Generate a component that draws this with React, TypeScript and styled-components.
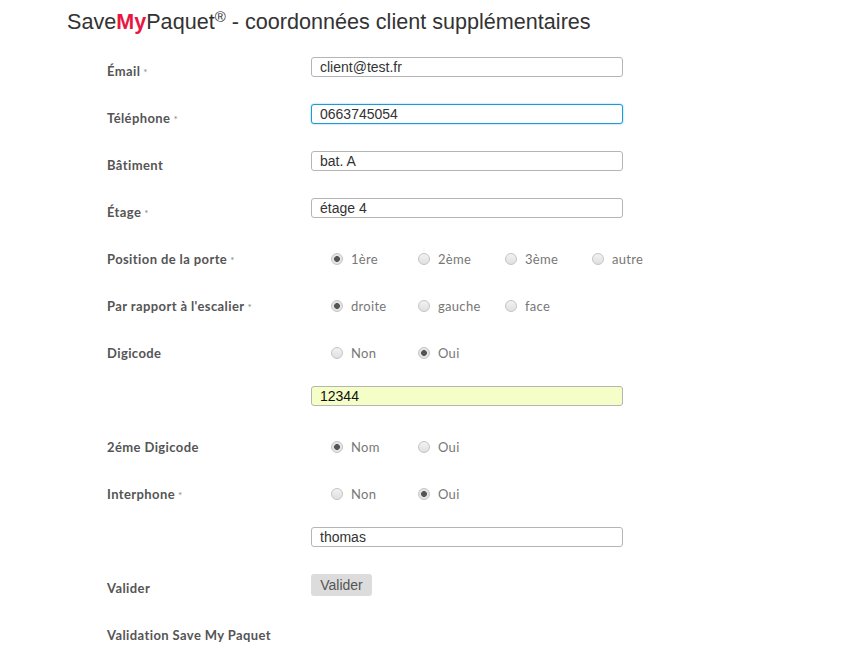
import React from "react";
import styled, { createGlobalStyle } from "styled-components";

const GlobalStyle = createGlobalStyle`
  html, body { margin: 0; padding: 0; background: #fff; }
  body { font-family: "Liberation Sans", Arial, sans-serif; }
`;

const Page = styled.div`
  padding: 9px 0 0 67px;
`;

const Title = styled.h1`
  margin: 0 0 12px 0;
  font-family: "Liberation Sans", Arial, sans-serif;
  font-weight: 400;
  font-size: 21.6px;
  line-height: 26px;
  color: #333;
`;

const Brand = styled.span`
  color: #e8173f;
  font-weight: 700;
`;

const Reg = styled.sup`
  font-size: 15px;
  line-height: 0;
  vertical-align: 7px;
`;

const Form = styled.form`
  margin-left: 40px;
  display: flex;
  flex-direction: column;
`;

const Row = styled.div`
  display: grid;
  grid-template-columns: 204px 312px;
  align-items: center;
  height: 47px;
`;

const Label = styled.label`
  font-family: Lato, "Open Sans", sans-serif;
  font-weight: 700;
  font-size: 13px;
  letter-spacing: 0.4px;
  color: #555;
  white-space: nowrap;
`;

const Star = styled.span`
  font-size: 10px;
  color: #888;
  font-weight: 400;
  margin-left: 3px;
`;

const Input = styled.input<{ $focused?: boolean; $filled?: boolean }>`
  box-sizing: border-box;
  width: 312px;
  height: 20px;
  margin: 0 0 8px 0;
  padding: 0 8px;
  border: 1px solid ${(p) => (p.$focused ? "#1a9ad6" : "#b5b5b5")};
  box-shadow: ${(p) => (p.$focused ? "0 0 2px rgba(26,154,214,0.6)" : "none")};
  border-radius: 3px;
  background: ${(p) => (p.$filled ? "#f5fec7" : "#fff")};
  font-family: "Liberation Sans", Arial, sans-serif;
  font-size: 14px;
  color: ${(p) => (p.$filled ? "#111" : "#333")};
  outline: none;
`;

const RadioGroup = styled.div`
  display: flex;
  padding-left: 20px;
`;

const Option = styled.label`
  flex: none;
  width: 87px;
  display: flex;
  align-items: center;
  gap: 8px;
  font-family: Lato, "Open Sans", sans-serif;
  font-size: 13px;
  letter-spacing: 0.3px;
  color: #777;
`;

const Radio = styled.span<{ $checked?: boolean }>`
  box-sizing: border-box;
  width: 12px;
  height: 12px;
  border-radius: 50%;
  border: 1px solid #c4c4c4;
  background: ${(p) =>
    p.$checked
      ? "radial-gradient(circle, #555 0 2.6px, #e4e4e4 3.2px)"
      : "linear-gradient(#f2f2f2, #e0e0e0)"};
  flex: none;
`;

const Button = styled.button`
  justify-self: start;
  width: 61px;
  height: 22px;
  margin-bottom: 6px;
  padding: 0;
  border: none;
  border-radius: 3px;
  background: #dcdcdc;
  font-family: "Liberation Sans", Arial, sans-serif;
  font-size: 14px;
  color: #555;
`;

type Opt = { label: string; checked?: boolean };

const Radios = ({ options }: { options: Opt[] }) => (
  <RadioGroup>
    {options.map((o) => (
      <Option key={o.label}>
        <Radio $checked={o.checked} />
        {o.label}
      </Option>
    ))}
  </RadioGroup>
);

const Req = () => <Star>*</Star>;

export default function App() {
  return (
    <>
      <GlobalStyle />
      <Page>
        <Title>
          Save<Brand>My</Brand>Paquet<Reg>®</Reg> - coordonnées client supplémentaires
        </Title>
        <Form>
          <Row>
            <Label>Émail<Req /></Label>
            <Input defaultValue="client@test.fr" />
          </Row>
          <Row>
            <Label>Téléphone<Req /></Label>
            <Input $focused defaultValue="0663745054" />
          </Row>
          <Row>
            <Label>Bâtiment</Label>
            <Input defaultValue="bat. A" />
          </Row>
          <Row>
            <Label>Étage<Req /></Label>
            <Input defaultValue="étage 4" />
          </Row>
          <Row>
            <Label>Position de la porte<Req /></Label>
            <Radios
              options={[
                { label: "1ère", checked: true },
                { label: "2ème" },
                { label: "3ème" },
                { label: "autre" },
              ]}
            />
          </Row>
          <Row>
            <Label>Par rapport à l'escalier<Req /></Label>
            <Radios
              options={[{ label: "droite", checked: true }, { label: "gauche" }, { label: "face" }]}
            />
          </Row>
          <Row>
            <Label>Digicode</Label>
            <Radios options={[{ label: "Non" }, { label: "Oui", checked: true }]} />
          </Row>
          <Row>
            <span />
            <Input $filled defaultValue="12344" />
          </Row>
          <Row>
            <Label>2éme Digicode</Label>
            <Radios options={[{ label: "Nom", checked: true }, { label: "Oui" }]} />
          </Row>
          <Row>
            <Label>Interphone<Req /></Label>
            <Radios options={[{ label: "Non" }, { label: "Oui", checked: true }]} />
          </Row>
          <Row>
            <span />
            <Input defaultValue="thomas" />
          </Row>
          <Row>
            <Label>Valider</Label>
            <Button type="button">Valider</Button>
          </Row>
          <Row>
            <Label>Validation Save My Paquet</Label>
          </Row>
        </Form>
      </Page>
    </>
  );
}
